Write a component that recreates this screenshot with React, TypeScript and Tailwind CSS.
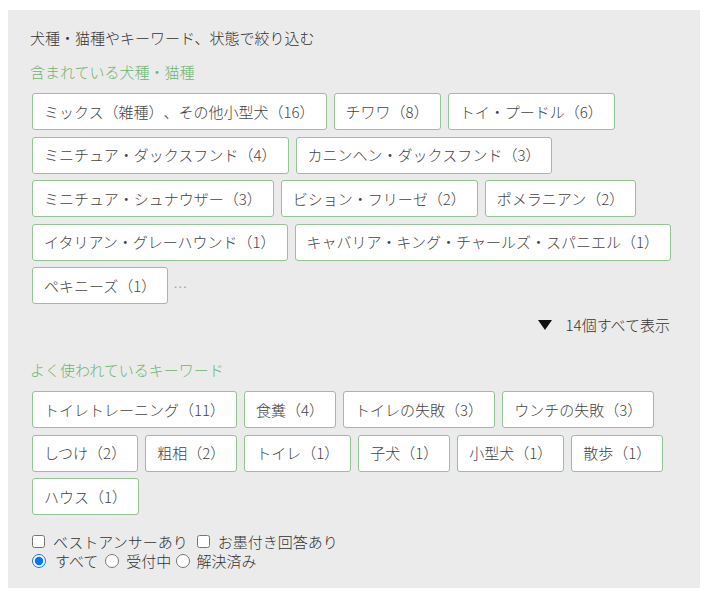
const breeds = [
    'ミックス（雑種）、その他小型犬（16）',
    'チワワ（8）',
    'トイ・プードル（6）',
    'ミニチュア・ダックスフンド（4）',
    'カニンヘン・ダックスフンド（3）',
    'ミニチュア・シュナウザー（3）',
    'ビション・フリーゼ（2）',
    'ポメラニアン（2）',
    'イタリアン・グレーハウンド（1）',
    'キャバリア・キング・チャールズ・スパニエル（1）',
    'ペキニーズ（1）',
]

const keywords = [
    'トイレトレーニング（11）',
    '食糞（4）',
    'トイレの失敗（3）',
    'ウンチの失敗（3）',
    'しつけ（2）',
    '粗相（2）',
    'トイレ（1）',
    '子犬（1）',
    '小型犬（1）',
    '散歩（1）',
    'ハウス（1）',
]

const Tag = ({ label }: { label: string }) => (
    <span className="h-[37px] flex items-center px-[11px] bg-white border border-[#93c493] rounded-[3px] text-[15px] text-[#444] whitespace-nowrap">
        {label}
    </span>
)

export default function App() {
    return (
        <div
            className="mx-2 mt-[10px] w-[692px] bg-[#ebebeb] pl-[22px] pr-[28px] pt-[17px] pb-[18px] text-[15px] leading-[22px] text-[#333] font-light [text-spacing-trim:space-all]"
            style={{ fontFamily: '"Noto Sans CJK JP", "Noto Sans", sans-serif' }}
        >
            <p>犬種・猫種やキーワード、状態で絞り込む</p>

            <p className="mt-[12px] text-[#6db56d]">含まれている犬種・猫種</p>
            <div className="mt-[10px] ml-[2px] flex flex-wrap items-center gap-x-[7px] gap-y-[6.5px]">
                {breeds.map((b) => (
                    <Tag key={b} label={b} />
                ))}
                <span className="text-[#999] text-[14px] -ml-[2px]">…</span>
            </div>

            <div className="mt-[10px] mr-[2px] flex justify-end items-center gap-[14px]">
                <svg width="14" height="10" viewBox="0 0 14 10">
                    <path d="M0 0 H14 L7 10 Z" fill="#111" />
                </svg>
                <span>14個すべて表示</span>
            </div>

            <p className="mt-[23px] text-[#6db56d]">よく使われているキーワード</p>
            <div className="mt-[10px] ml-[2px] flex flex-wrap items-center gap-x-[7px] gap-y-[6.5px]">
                {keywords.map((k) => (
                    <Tag key={k} label={k} />
                ))}
            </div>

            <div className="mt-[17px] ml-[2px] leading-[19px]">
                <div className="flex items-center">
                    <input type="checkbox" className="w-[13px] h-[13px] mr-[8px]" />
                    <span>ベストアンサーあり</span>
                    <input type="checkbox" className="w-[13px] h-[13px] ml-[9px] mr-[8px]" />
                    <span>お墨付き回答あり</span>
                </div>
                <div className="flex items-center">
                    <input type="radio" name="st" defaultChecked className="w-[14px] h-[14px] mr-[9px]" />
                    <span>すべて</span>
                    <input type="radio" name="st" className="w-[14px] h-[14px] ml-[7px] mr-[7px]" />
                    <span>受付中</span>
                    <input type="radio" name="st" className="w-[14px] h-[14px] ml-[5px] mr-[6px]" />
                    <span>解決済み</span>
                </div>
            </div>
        </div>
    )
}
